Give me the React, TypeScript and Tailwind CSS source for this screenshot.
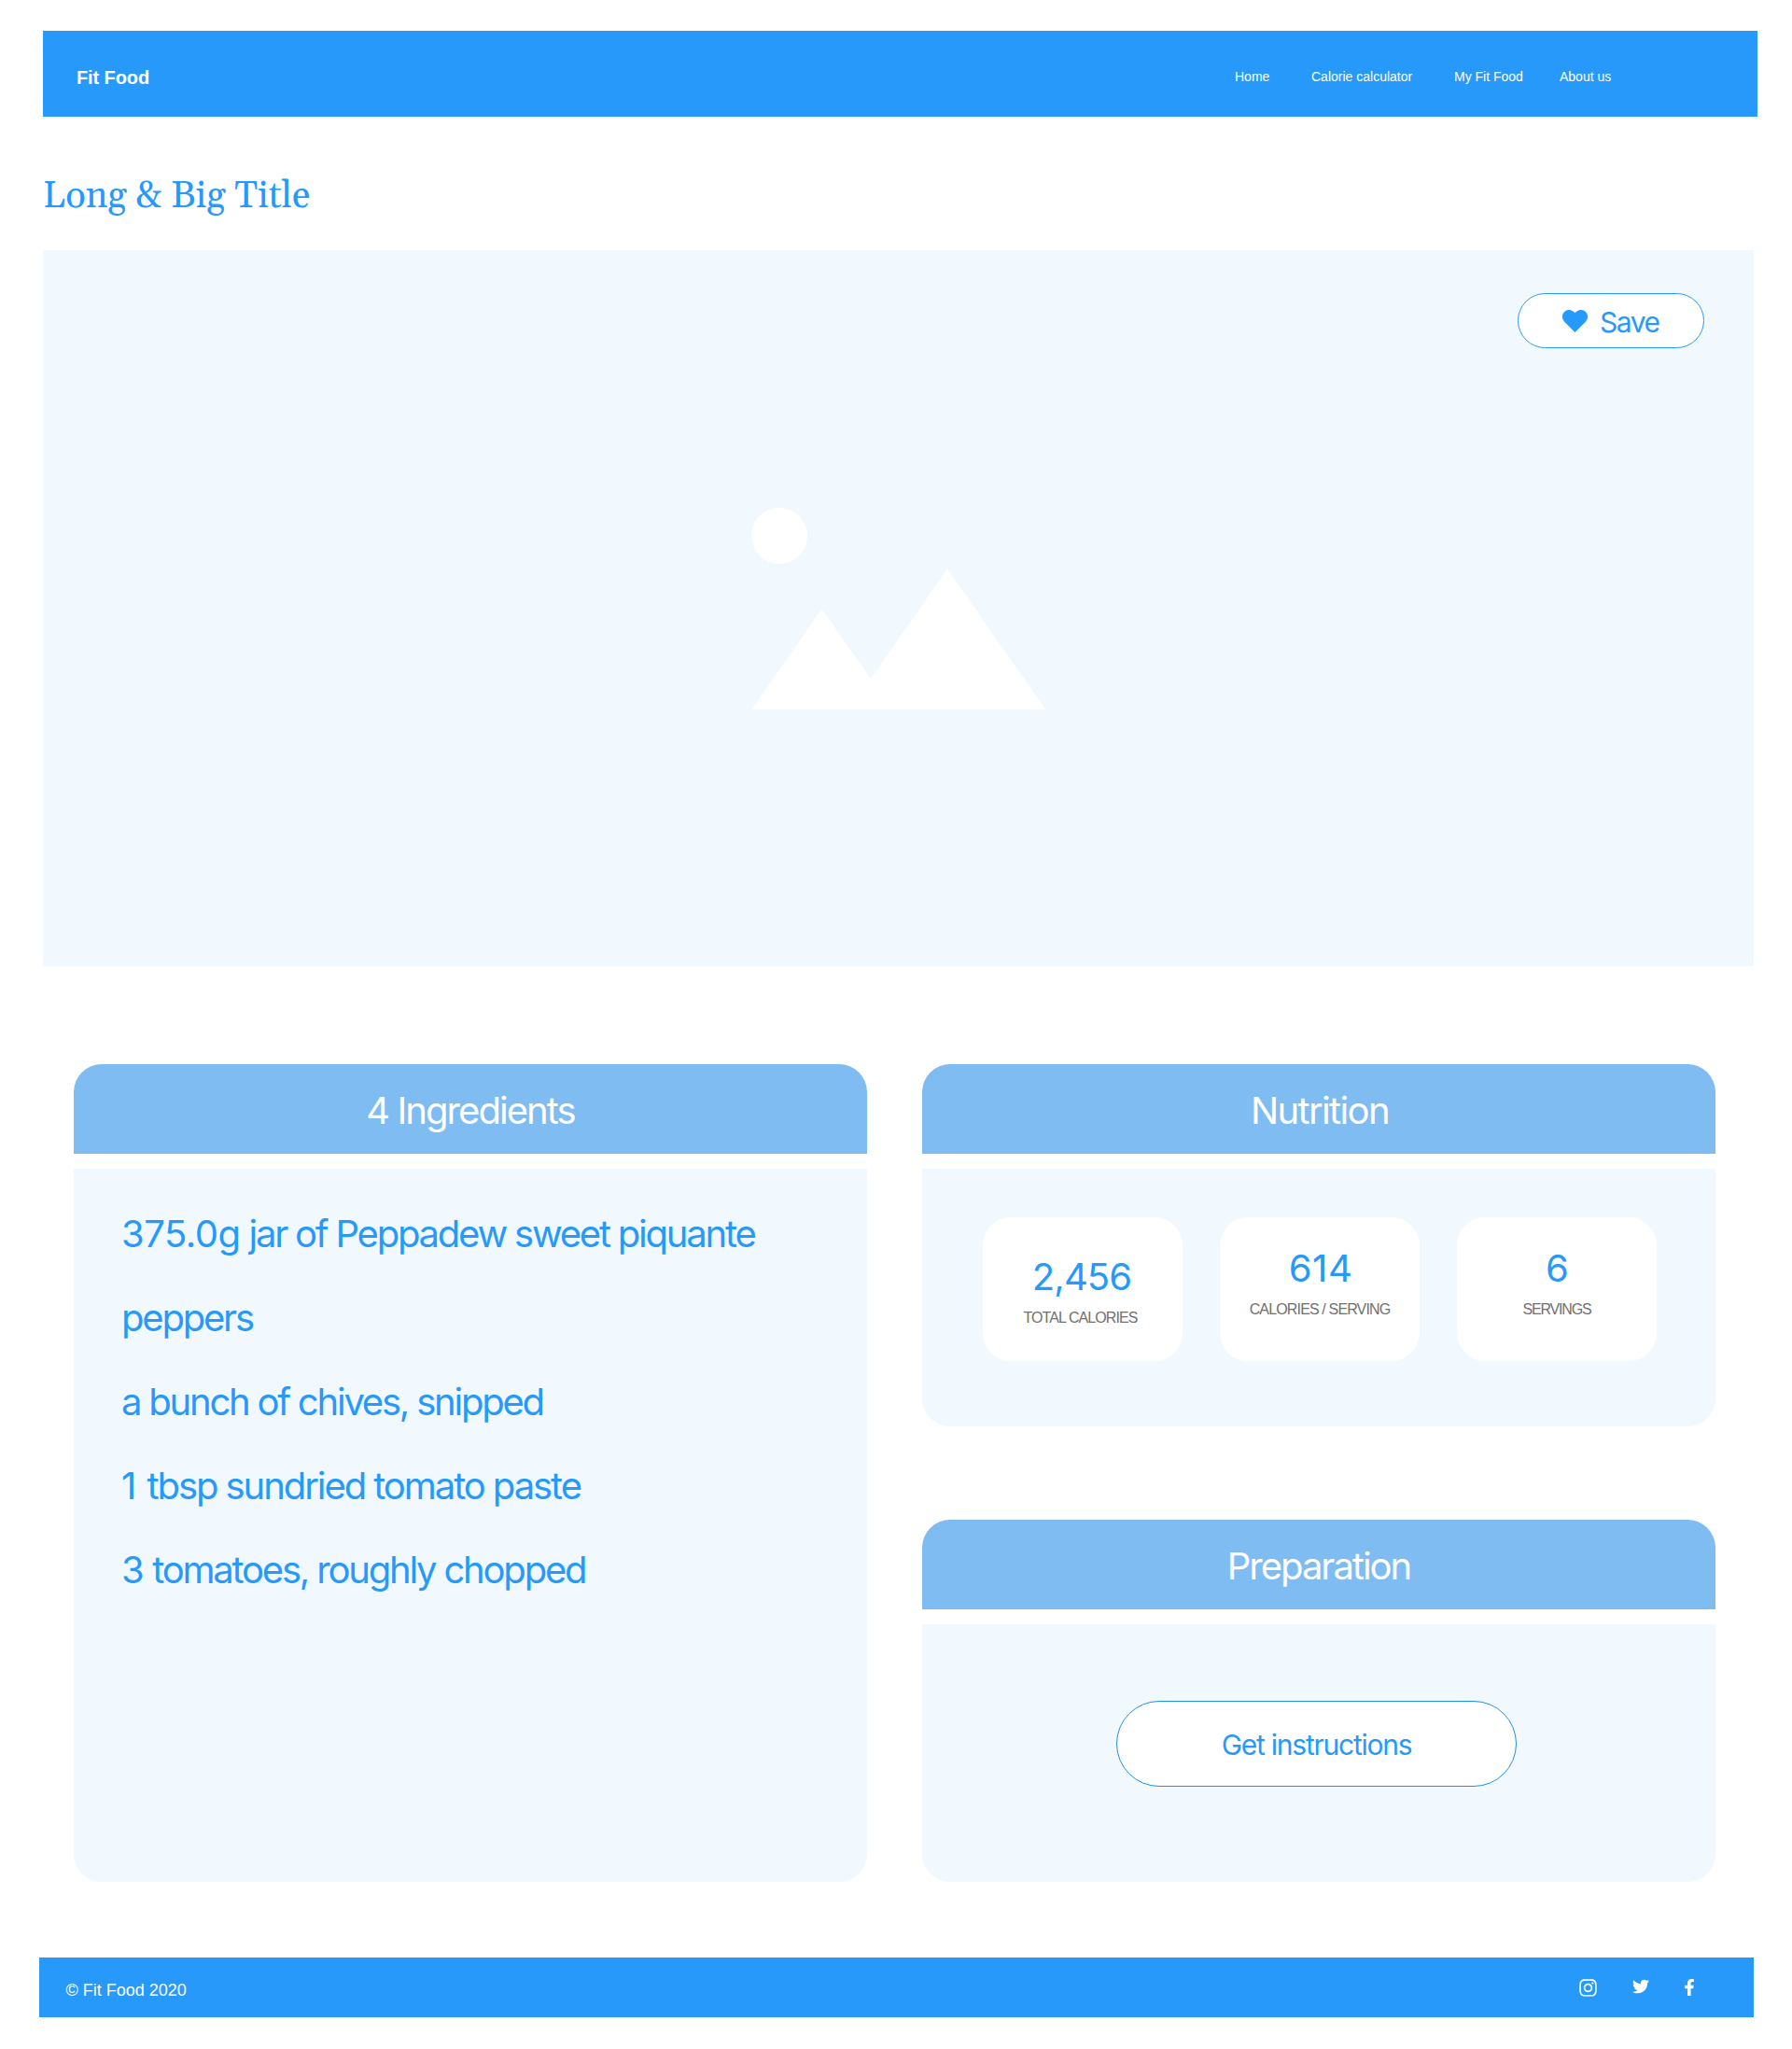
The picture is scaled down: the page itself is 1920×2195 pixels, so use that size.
import React from "react";
import { FaFacebookF, FaInstagram, FaTwitter } from "react-icons/fa";

const navItems = [
  { label: "Home", className: "w-[82px]" },
  { label: "Calorie calculator", className: "w-[153px]" },
  { label: "My Fit Food", className: "w-[113px]" },
  { label: "About us", className: "" },
];

const ingredients = [
  { lead: "375.0g", leadClass: "tracking-[-0.5px]", rest: " jar of Peppadew sweet piquante", className: "tracking-[-2.22px]" },
  { lead: "", leadClass: "", rest: "peppers", className: "tracking-[-2.2px]" },
  { lead: "", leadClass: "", rest: "a bunch of chives, snipped", className: "tracking-[-2.22px]" },
  { lead: "1", leadClass: "tracking-[2px]", rest: " tbsp sundried tomato paste", className: "tracking-[-2.07px]" },
  { lead: "3", leadClass: "tracking-[-0.6px]", rest: " tomatoes, roughly chopped", className: "tracking-[-2.2px]" },
];

const stats = [
  { value: "2,456", label: "TOTAL CALORIES", pad: "pt-[44px]", num: "tracking-[-0.9px] pr-[2px]", text: "tracking-[-0.92px] pr-[5px]" },
  { value: "614", label: "CALORIES / SERVING", pad: "pt-[35px]", num: "tracking-[0.6px] pl-[2px]", text: "tracking-[-0.85px]" },
  { value: "6", label: "SERVINGS", pad: "pt-[35px]", num: "pl-px", text: "tracking-[-1.15px]" },
];

function Card({ title, titleClass, bodyClass, children }: { title: string; titleClass: string; bodyClass: string; children: React.ReactNode }) {
  return (
    <section className="flex w-[850px] flex-col gap-4 font-[Inter,sans-serif]">
      <h2 className={`h-24 rounded-t-[30px] bg-[#7fbcf2] pt-[3px] text-center text-[40px] leading-[94px] text-white ${titleClass}`}>{title}</h2>
      <div className={`rounded-b-[30px] bg-[#f1f9ff] ${bodyClass}`}>{children}</div>
    </section>
  );
}

export default function App() {
  return (
    <div className="flex h-[2195px] w-[1920px] flex-col bg-white pt-[33px] font-['Liberation_Sans',Arial,sans-serif]">
      <header className="ml-[46px] flex h-[92px] w-[1837px] items-center bg-[#2699fb] text-white">
        <div className="w-[1277px] pt-[7px] pl-[36px] text-xl leading-6 font-bold tracking-[-0.1px]">Fit Food</div>
        <nav className="flex pt-[6px] text-sm leading-5">
          {navItems.map((n) => (
            <a key={n.label} className={`whitespace-nowrap ${n.className}`}>{n.label}</a>
          ))}
        </nav>
      </header>

      <h1 className="mt-[56px] ml-[46px] h-[87px] font-[Gelasio,Georgia,'Liberation_Serif',serif] text-[40px] leading-[60px] text-[#2699fb]">
        Long &amp; Big Title
      </h1>

      <div className="ml-[46px] flex h-[767px] w-[1833px] flex-col items-end bg-[#f1f9ff] pt-[46px]">
        <button className="mr-[53px] flex h-[59px] w-[200px] items-center rounded-full border border-[#2699fb] bg-white pl-[47px] font-[Inter,sans-serif] text-[30px] text-[#2699fb]">
          <svg width="27" height="24" viewBox="0 0 27 24" fill="currentColor">
            <path d="M13.5 24 2 12.4A7.3 7.3 0 0 1 12.5 2.2l1 1.1 1-1.1A7.3 7.3 0 0 1 25 12.4Z" />
          </svg>
          <span className="ml-[13px] pt-[2px] leading-9 tracking-[-1.5px]">Save</span>
        </button>
        <svg width="316" height="218" viewBox="0 0 316 218" fill="#fff" className="mt-[170px] mr-[759px]">
          <circle cx="31" cy="31" r="30" />
          <path d="M1.5 216.700 76.500 109.500 129 184 211 66.500 316 216.700Z" />
        </svg>
      </div>

      <main className="mt-[105px] ml-[79px] flex gap-[59px]">
        <Card title="4 Ingredients" titleClass="tracking-[-1.95px]" bodyClass="h-[764px] pt-[25px] pl-[51px]">
          <ul className="text-[40px] leading-[90px] whitespace-nowrap text-[#2699fb]">
            {ingredients.map((item) => (
              <li key={item.rest} className={item.className}>
                <span className={item.leadClass}>{item.lead}</span>
                {item.rest}
              </li>
            ))}
          </ul>
        </Card>
        <div className="flex flex-col gap-[100px]">
          <Card title="Nutrition" titleClass="pl-[2px] tracking-[-1.65px]" bodyClass="flex h-[276px] gap-[40px] pt-[52px] pl-[65px]">
            {stats.map((s) => (
              <div key={s.label} className={`h-[154px] w-[214px] rounded-[30px] bg-white text-center ${s.pad}`}>
                <div className={`text-[40px] leading-10 text-[#2699fb] ${s.num}`}>{s.value}</div>
                <div className={`mt-[14px] font-['Liberation_Sans',Arial,sans-serif] text-base leading-5 text-[#707070] ${s.text}`}>{s.label}</div>
              </div>
            ))}
          </Card>
          <Card title="Preparation" titleClass="tracking-[-2.02px]" bodyClass="h-[276px] pt-[82px] pl-[208px]">
            <button className="block h-[92px] w-[429px] rounded-full border border-[#1e90e8] bg-white pt-[3px] text-[30px] tracking-[-1.25px] text-[#2699fb]">Get instructions</button>
          </Card>
        </div>
      </main>

      <footer className="mt-[81px] ml-[42px] flex h-16 w-[1837px] items-start bg-[#2699fb] text-white">
        <p className="w-[1650px] pt-[23px] pl-[28.5px] text-lg leading-6">© Fit Food 2020</p>
        <FaInstagram size={21} className="mt-[22px] -ml-[1px]" />
        <FaTwitter size={18} className="mt-[22px] ml-[37px]" />
        <FaFacebookF size={18} className="mt-[23px] ml-[34px]" />
      </footer>
    </div>
  );
}
